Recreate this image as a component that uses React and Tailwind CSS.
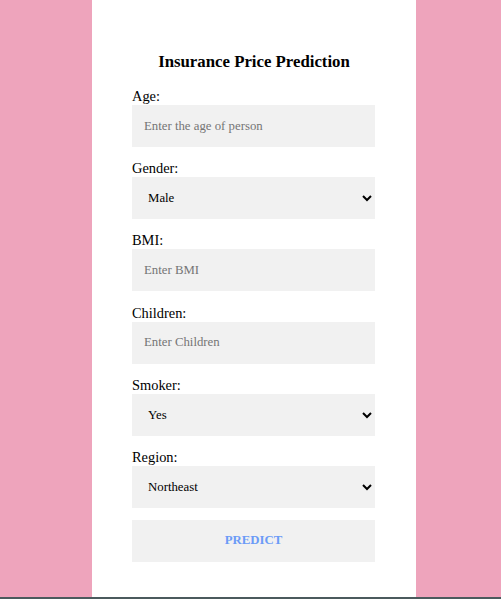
import React from "react";

const serif = { fontFamily: '"Liberation Serif", "Times New Roman", serif' };

function Field({ label, children }) {
  return (
    <div className="flex flex-col mb-[13.2px]">
      <label className="text-[14.4px] leading-[17px] text-black">{label}</label>
      {children}
    </div>
  );
}

function TextInput({ placeholder }) {
  return (
    <input
      type="text"
      placeholder={placeholder}
      className="h-[42px] w-[243px] bg-[#f1f1f1] px-3 text-[12.8px] text-black outline-none placeholder:text-[#757575]"
      style={serif}
    />
  );
}

function Select({ options }) {
  return (
    <select
      className="h-[42px] w-[243px] bg-[#f1f1f1] pl-3 pr-1 text-[12.8px] text-black outline-none"
      style={serif}
      defaultValue={options[0]}
    >
      {options.map((o) => (
        <option key={o}>{o}</option>
      ))}
    </select>
  );
}

export default function App() {
  return (
    <div style={serif} className="w-full">
      <div className="flex h-[597px] w-full bg-[#eea4bc]">
        <div className="ml-[92px] h-full w-[324px] bg-white px-[40px] pt-[52px]">
          <h3 className="text-center text-[16.8px] font-bold leading-[20px] text-black">
            Insurance Price Prediction
          </h3>
          <div className="mt-[16px] flex flex-col">
            <Field label="Age:">
              <TextInput placeholder="Enter the age of person" />
            </Field>
            <Field label="Gender:">
              <Select options={["Male", "Female"]} />
            </Field>
            <Field label="BMI:">
              <TextInput placeholder="Enter BMI" />
            </Field>
            <Field label="Children:">
              <TextInput placeholder="Enter Children" />
            </Field>
            <Field label="Smoker:">
              <Select options={["Yes", "No"]} />
            </Field>
            <Field label="Region:">
              <Select options={["Northeast", "Northwest", "Southeast", "Southwest"]} />
            </Field>
            <button
              className="mt-[-1.2px] h-[42px] w-[243px] bg-[#f1f1f1] text-[12.8px] font-bold text-[#6b9bf7]"
              style={serif}
            >
              PREDICT
            </button>
          </div>
        </div>
      </div>
      <div className="h-[2px] w-full bg-[#4b5a5d]" />
    </div>
  );
}
